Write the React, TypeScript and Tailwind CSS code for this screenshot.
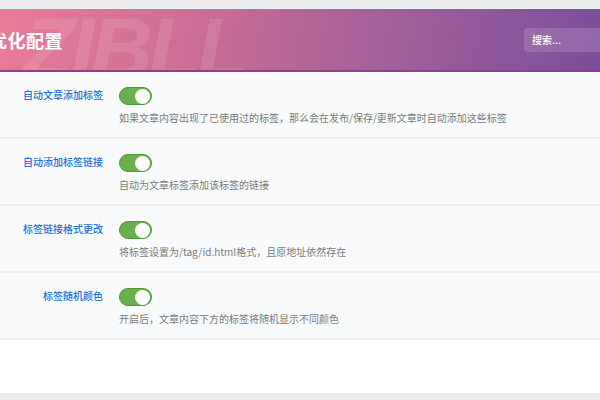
import React from "react";

const rows = [
  { label: "自动文章添加标签", desc: "如果文章内容出现了已使用过的标签，那么会在发布/保存/更新文章时自动添加这些标签" },
  { label: "自动添加标签链接", desc: "自动为文章标签添加该标签的链接" },
  { label: "标签链接格式更改", desc: "将标签设置为/tag/id.html格式，且原地址依然存在" },
  { label: "标签随机颜色", desc: "开启后，文章内容下方的标签将随机显示不同颜色" },
];

function Toggle() {
  return (
    <div className="w-[33px] h-[18px] rounded-full bg-[#6ab04c] border border-[#4f9a33] flex items-center justify-end pr-[1px]">
      <div className="w-[15px] h-[15px] rounded-full bg-white" />
    </div>
  );
}

export default function App() {
  return (
    <div
      className="w-[600px] h-[400px] bg-white flex flex-col overflow-hidden"
      style={{ fontFamily: '"Noto Sans CJK SC", "Noto Sans", sans-serif' }}
    >
      <div className="h-[7px] bg-[#ebebeb] shrink-0" />
      <div className="h-[2px] bg-[#e6f4f6] shrink-0" />
      <div className="relative h-[63px] shrink-0 overflow-hidden bg-[linear-gradient(100deg,#e97c98_0%,#c96c95_35%,#a1609a_65%,#7c4d9b_100%)] border-b-2 border-[#8f3f8f] flex items-center justify-between">
        <div
          className="absolute left-[22px] top-[-4px] text-[86px] font-black italic leading-none tracking-[-4px] text-white/10 select-none"
          style={{ fontFamily: '"Liberation Sans", sans-serif' }}
        >
          ZIBLL
        </div>
        <div className="relative ml-[-11px] text-[18px] font-bold text-white leading-none tracking-[0.5px]">优化配置</div>
        <div className="relative mr-[-20px] w-[96px] h-[24px] rounded-[4px] bg-white/15 flex items-center pl-[8px] text-[10px] font-medium text-white">
          搜索...
        </div>
      </div>
      <div className="flex flex-col">
        {rows.map((r) => (
          <div key={r.label} className="h-[67px] bg-[#f9fafb] border-b-2 border-[#eceef0] flex">
            <div className="w-[103px] shrink-0 pt-[15px] text-right text-[10px] font-medium text-[#2271d6]">{r.label}</div>
            <div className="ml-[16px] pt-[15px] flex flex-col gap-[5px]">
              <Toggle />
              <div className="text-[10px] text-[#7a7a7a]">{r.desc}</div>
            </div>
          </div>
        ))}
      </div>
      <div className="flex-1" />
      <div className="h-[7px] bg-[#ebebeb] shrink-0" />
    </div>
  );
}
